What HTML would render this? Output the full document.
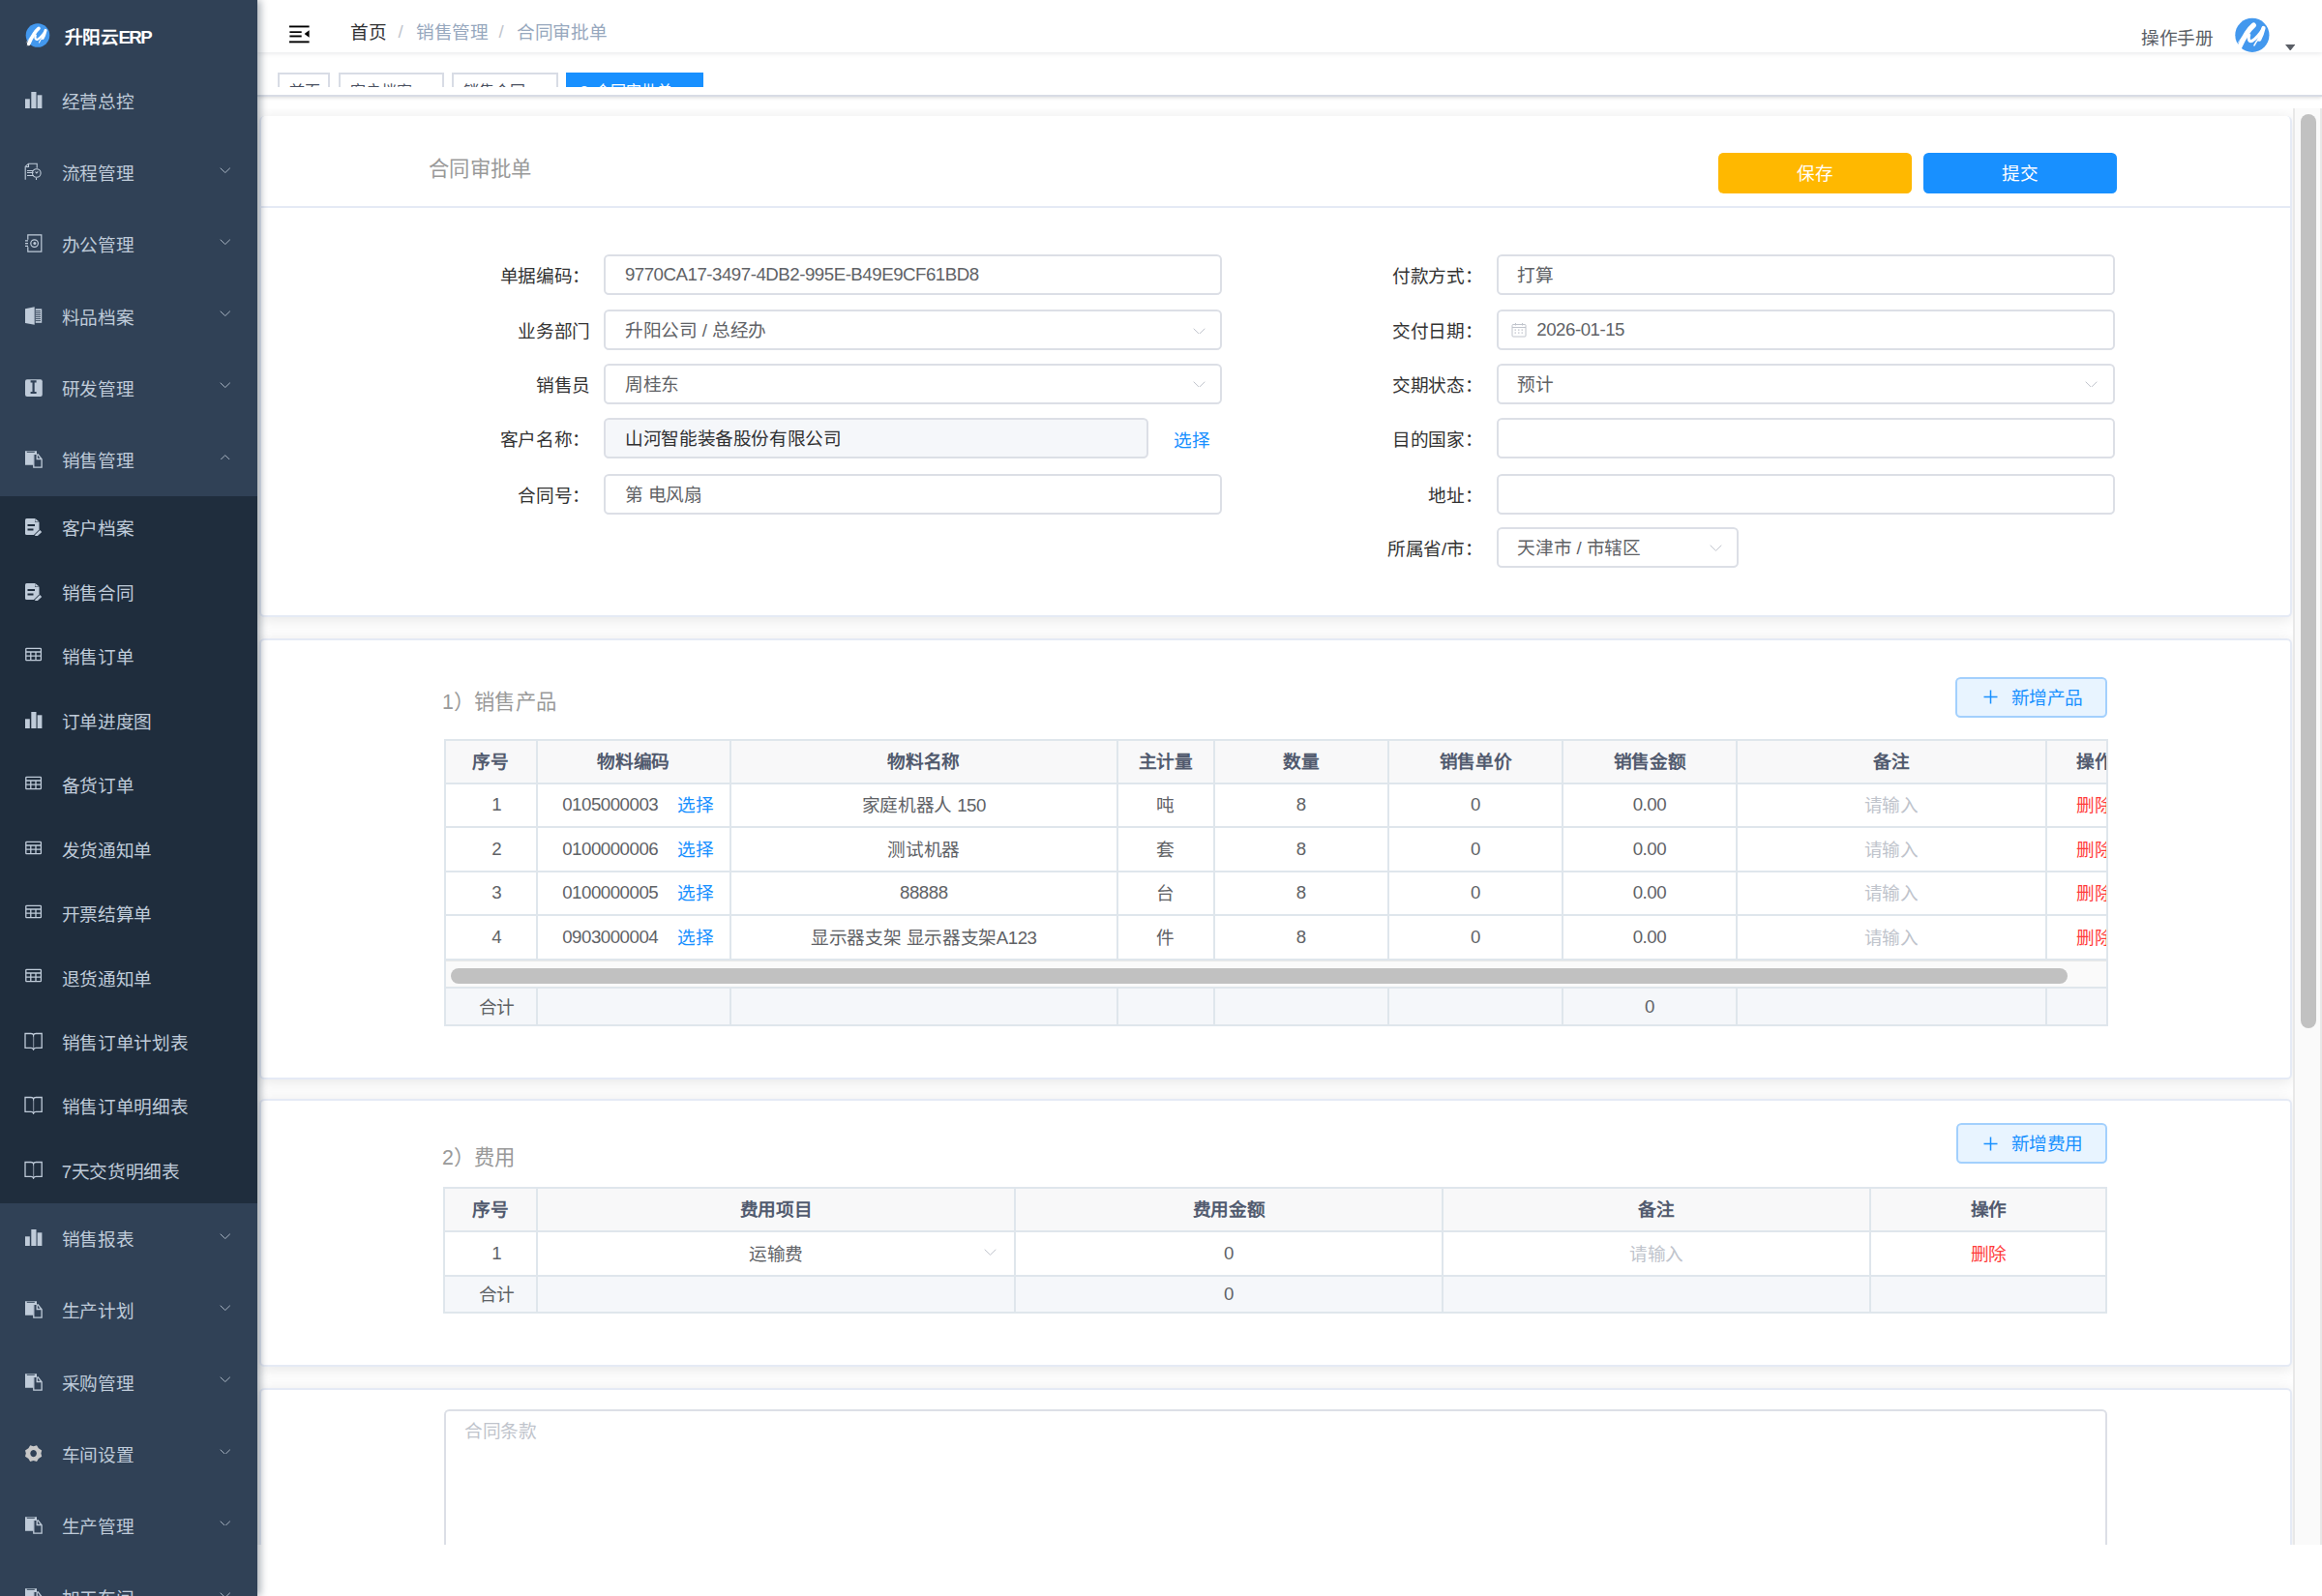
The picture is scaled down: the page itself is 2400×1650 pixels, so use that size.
<!DOCTYPE html>
<html lang="zh-CN"><head><meta charset="utf-8"><title>合同审批单</title>
<style>
html,body{margin:0;padding:0;}
body{width:2400px;height:1650px;overflow:hidden;position:relative;background:#fff;font-family:"Liberation Sans",sans-serif;}
div,svg{position:absolute;box-sizing:border-box;}
.t{white-space:nowrap;overflow:visible;}
.c{display:inline-block;width:1em;text-align:center;}
</style></head><body>

<div style="left:266px;top:112px;width:2134px;height:1484.7px;overflow:hidden;background:#fff;">
<div style="left:-266px;top:-112px;width:2400px;height:1650px;">
<div style="left:267.7px;top:120px;width:2101.6px;height:518px;background:#fff;border:2px solid #e5eaf5;border-radius:5.33px;box-shadow:0 2.67px 16px rgba(0,0,0,0.1);border-top:0;"></div>
<div style="left:267.7px;top:659.5px;width:2101.6px;height:456.5px;background:#fff;border:2px solid #e5eaf5;border-radius:5.33px;box-shadow:0 2.67px 16px rgba(0,0,0,0.1);"></div>
<div style="left:267.7px;top:1136px;width:2101.6px;height:277px;background:#fff;border:2px solid #e5eaf5;border-radius:5.33px;box-shadow:0 2.67px 16px rgba(0,0,0,0.1);"></div>
<div style="left:267.7px;top:1434.5px;width:2101.6px;height:365.5px;background:#fff;border:2px solid #e5eaf5;border-radius:5.33px;box-shadow:0 2.67px 16px rgba(0,0,0,0.1);"></div>
<div style="left:269.7px;top:213px;width:2097.6px;height:2px;background:#e5eaf5;"></div>
<div class="t" style="left:443px;top:160.87px;width:257px;height:29.86px;line-height:29.86px;font-size:21.33px;color:#999;text-align:left;font-weight:400;"><span class="c">合</span><span class="c">同</span><span class="c">审</span><span class="c">批</span><span class="c">单</span></div>
<div style="left:1776px;top:158px;width:200px;height:41.7px;background:#ffb800;border-radius:5.33px;"></div>
<div class="t" style="left:1776px;top:166.83px;width:200px;height:26.14px;line-height:26.14px;font-size:18.67px;color:#fff;text-align:center;font-weight:400;"><span class="c">保</span><span class="c">存</span></div>
<div style="left:1988px;top:158px;width:200px;height:41.7px;background:#1890ff;border-radius:5.33px;"></div>
<div class="t" style="left:1988px;top:166.83px;width:200px;height:26.14px;line-height:26.14px;font-size:18.67px;color:#fff;text-align:center;font-weight:400;"><span class="c">提</span><span class="c">交</span></div>
<div class="t" style="left:400px;top:273.13px;width:210px;height:26.14px;line-height:26.14px;font-size:18.67px;color:#333;text-align:right;font-weight:400;"><span class="c">单</span><span class="c">据</span><span class="c">编</span><span class="c">码</span><span class="c">：</span></div>
<div style="left:624.4px;top:263px;width:638.8px;height:42.4px;background:#fff;border:2px solid #dcdfe6;border-radius:5.33px;"></div>
<div class="t" style="left:645.9px;top:271.13px;width:577.3px;height:26.14px;line-height:26.14px;font-size:18.67px;color:#606266;text-align:left;font-weight:400;"><span style="letter-spacing:-0.47px">9770CA17-3497-4DB2-995E-B49E9CF61BD8</span></div>
<div class="t" style="left:400px;top:330.23px;width:210px;height:26.14px;line-height:26.14px;font-size:18.67px;color:#333;text-align:right;font-weight:400;"><span class="c">业</span><span class="c">务</span><span class="c">部</span><span class="c">门</span></div>
<div style="left:624.4px;top:320.1px;width:638.8px;height:42.4px;background:#fff;border:2px solid #dcdfe6;border-radius:5.33px;"></div>
<div class="t" style="left:645.9px;top:329.23px;width:577.3px;height:26.14px;line-height:26.14px;font-size:18.67px;color:#606266;text-align:left;font-weight:400;"><span class="c">升</span><span class="c">阳</span><span class="c">公</span><span class="c">司</span> / <span class="c">总</span><span class="c">经</span><span class="c">办</span></div>
<svg style="position:absolute;left:1233.1px;top:338.55px;" width="13" height="6.5" viewBox="0 0 13 6.5"><path d="M0.7 0.7 L6.5 6.3 L12.3 0.7" fill="none" stroke="#c0c4cc" stroke-width="1.0"/></svg>
<div class="t" style="left:400px;top:385.63px;width:210px;height:26.14px;line-height:26.14px;font-size:18.67px;color:#333;text-align:right;font-weight:400;"><span class="c">销</span><span class="c">售</span><span class="c">员</span></div>
<div style="left:624.4px;top:375.5px;width:638.8px;height:42.4px;background:#fff;border:2px solid #dcdfe6;border-radius:5.33px;"></div>
<div class="t" style="left:645.9px;top:384.63px;width:577.3px;height:26.14px;line-height:26.14px;font-size:18.67px;color:#606266;text-align:left;font-weight:400;"><span class="c">周</span><span class="c">桂</span><span class="c">东</span></div>
<svg style="position:absolute;left:1233.1px;top:393.95px;" width="13" height="6.5" viewBox="0 0 13 6.5"><path d="M0.7 0.7 L6.5 6.3 L12.3 0.7" fill="none" stroke="#c0c4cc" stroke-width="1.0"/></svg>
<div class="t" style="left:400px;top:442.23px;width:210px;height:26.14px;line-height:26.14px;font-size:18.67px;color:#333;text-align:right;font-weight:400;"><span class="c">客</span><span class="c">户</span><span class="c">名</span><span class="c">称</span><span class="c">：</span></div>
<div style="left:624.4px;top:432.1px;width:562.6px;height:42.4px;background:#f5f7fa;border:2px solid #dcdfe6;border-radius:5.33px;"></div>
<div class="t" style="left:645.9px;top:441.23px;width:534.1px;height:26.14px;line-height:26.14px;font-size:18.67px;color:#303133;text-align:left;font-weight:400;"><span class="c">山</span><span class="c">河</span><span class="c">智</span><span class="c">能</span><span class="c">装</span><span class="c">备</span><span class="c">股</span><span class="c">份</span><span class="c">有</span><span class="c">限</span><span class="c">公</span><span class="c">司</span></div>
<div class="t" style="left:1213px;top:442.53px;width:47px;height:26.14px;line-height:26.14px;font-size:18.67px;color:#1890ff;text-align:left;font-weight:400;"><span class="c">选</span><span class="c">择</span></div>
<div class="t" style="left:400px;top:499.63px;width:210px;height:26.14px;line-height:26.14px;font-size:18.67px;color:#333;text-align:right;font-weight:400;"><span class="c">合</span><span class="c">同</span><span class="c">号</span><span class="c">：</span></div>
<div style="left:624.4px;top:489.5px;width:638.8px;height:42.4px;background:#fff;border:2px solid #dcdfe6;border-radius:5.33px;"></div>
<div class="t" style="left:645.9px;top:498.63px;width:577.3px;height:26.14px;line-height:26.14px;font-size:18.67px;color:#606266;text-align:left;font-weight:400;"><span class="c">第</span> <span class="c">电</span><span class="c">风</span><span class="c">扇</span></div>
<div class="t" style="left:1300px;top:273.13px;width:232.4px;height:26.14px;line-height:26.14px;font-size:18.67px;color:#333;text-align:right;font-weight:400;"><span class="c">付</span><span class="c">款</span><span class="c">方</span><span class="c">式</span><span class="c">：</span></div>
<div style="left:1546.8px;top:263px;width:638.8px;height:42.4px;background:#fff;border:2px solid #dcdfe6;border-radius:5.33px;"></div>
<div class="t" style="left:1568.3px;top:272.13px;width:577.3px;height:26.14px;line-height:26.14px;font-size:18.67px;color:#606266;text-align:left;font-weight:400;"><span class="c">打</span><span class="c">算</span></div>
<div class="t" style="left:1300px;top:330.23px;width:232.4px;height:26.14px;line-height:26.14px;font-size:18.67px;color:#333;text-align:right;font-weight:400;"><span class="c">交</span><span class="c">付</span><span class="c">日</span><span class="c">期</span><span class="c">：</span></div>
<div style="left:1546.8px;top:320.1px;width:638.8px;height:42.4px;background:#fff;border:2px solid #dcdfe6;border-radius:5.33px;"></div>
<svg style="position:absolute;left:1562px;top:333.3px;" width="16" height="16" viewBox="0 0 16 16"><rect x="1" y="2.5" width="14" height="12.5" rx="1" fill="none" stroke="#c0c4cc" stroke-width="1"/><line x1="1" y1="5.5" x2="15" y2="5.5" stroke="#c0c4cc" stroke-width="1"/><line x1="4.5" y1="1" x2="4.5" y2="3.5" stroke="#c0c4cc"/><line x1="11.5" y1="1" x2="11.5" y2="3.5" stroke="#c0c4cc"/><g fill="#c0c4cc"><rect x="3.5" y="7.5" width="1.5" height="1.2"/><rect x="7" y="7.5" width="1.5" height="1.2"/><rect x="10.5" y="7.5" width="1.5" height="1.2"/><rect x="3.5" y="10.5" width="1.5" height="1.2"/><rect x="7" y="10.5" width="1.5" height="1.2"/><rect x="10.5" y="10.5" width="1.5" height="1.2"/></g></svg>
<div class="t" style="left:1588.3px;top:328.23px;width:511.7px;height:26.14px;line-height:26.14px;font-size:18.67px;color:#606266;text-align:left;font-weight:400;"><span style="letter-spacing:-0.47px">2026-01-15</span></div>
<div class="t" style="left:1300px;top:385.63px;width:232.4px;height:26.14px;line-height:26.14px;font-size:18.67px;color:#333;text-align:right;font-weight:400;"><span class="c">交</span><span class="c">期</span><span class="c">状</span><span class="c">态</span><span class="c">：</span></div>
<div style="left:1546.8px;top:375.5px;width:638.8px;height:42.4px;background:#fff;border:2px solid #dcdfe6;border-radius:5.33px;"></div>
<div class="t" style="left:1568.3px;top:384.63px;width:577.3px;height:26.14px;line-height:26.14px;font-size:18.67px;color:#606266;text-align:left;font-weight:400;"><span class="c">预</span><span class="c">计</span></div>
<svg style="position:absolute;left:2155px;top:393.95px;" width="13" height="6.5" viewBox="0 0 13 6.5"><path d="M0.7 0.7 L6.5 6.3 L12.3 0.7" fill="none" stroke="#c0c4cc" stroke-width="1.0"/></svg>
<div class="t" style="left:1300px;top:442.23px;width:232.4px;height:26.14px;line-height:26.14px;font-size:18.67px;color:#333;text-align:right;font-weight:400;"><span class="c">目</span><span class="c">的</span><span class="c">国</span><span class="c">家</span><span class="c">：</span></div>
<div style="left:1546.8px;top:432.1px;width:638.8px;height:42.4px;background:#fff;border:2px solid #dcdfe6;border-radius:5.33px;"></div>
<div class="t" style="left:1300px;top:499.63px;width:232.4px;height:26.14px;line-height:26.14px;font-size:18.67px;color:#333;text-align:right;font-weight:400;"><span class="c">地</span><span class="c">址</span><span class="c">：</span></div>
<div style="left:1546.8px;top:489.5px;width:638.8px;height:42.4px;background:#fff;border:2px solid #dcdfe6;border-radius:5.33px;"></div>
<div class="t" style="left:1300px;top:555.13px;width:232.4px;height:26.14px;line-height:26.14px;font-size:18.67px;color:#333;text-align:right;font-weight:400;"><span class="c">所</span><span class="c">属</span><span class="c">省</span>/<span class="c">市</span><span class="c">：</span></div>
<div style="left:1546.8px;top:545px;width:250.4px;height:42.4px;background:#fff;border:2px solid #dcdfe6;border-radius:5.33px;"></div>
<div class="t" style="left:1568.3px;top:554.13px;width:191.7px;height:26.14px;line-height:26.14px;font-size:18.67px;color:#606266;text-align:left;font-weight:400;"><span class="c">天</span><span class="c">津</span><span class="c">市</span> / <span class="c">市</span><span class="c">辖</span><span class="c">区</span></div>
<svg style="position:absolute;left:1767.1px;top:563.45px;" width="13" height="6.5" viewBox="0 0 13 6.5"><path d="M0.7 0.7 L6.5 6.3 L12.3 0.7" fill="none" stroke="#c0c4cc" stroke-width="1.0"/></svg>
<div class="t" style="left:457px;top:711.97px;width:343px;height:29.86px;line-height:29.86px;font-size:21.33px;color:#999;text-align:left;font-weight:400;"><span style="letter-spacing:-0.47px">1</span><span class="c">）</span><span class="c">销</span><span class="c">售</span><span class="c">产</span><span class="c">品</span></div>
<div style="left:2021.3px;top:699.6px;width:157.1px;height:42.7px;background:#e8f4ff;border:2px solid #a3d0fd;border-radius:5.33px;"></div>
<svg style="position:absolute;left:2050px;top:713.45px;" width="15" height="15" viewBox="0 0 15 15"><path d="M7.5 0.5V14.5M0.5 7.5H14.5" stroke="#1890ff" stroke-width="1.5"/></svg>
<div class="t" style="left:2078.5px;top:708.88px;width:91.5px;height:26.14px;line-height:26.14px;font-size:18.67px;color:#1890ff;text-align:left;font-weight:400;"><span class="c">新</span><span class="c">增</span><span class="c">产</span><span class="c">品</span></div>
<div style="left:458.8px;top:763.7px;width:1720px;height:2000px;overflow:hidden;">
<div style="left:-458.8px;top:-763.7px;width:2400px;height:1650px;">
<div style="left:458.8px;top:763.7px;width:1756.1px;height:46px;background:#f8f8f9;"></div>
<div class="t" style="left:458.8px;top:775.13px;width:95.9px;height:26.14px;line-height:26.14px;font-size:18.67px;color:#515a6e;text-align:center;font-weight:700;"><span class="c">序</span><span class="c">号</span></div>
<div class="t" style="left:554.7px;top:775.13px;width:200.1px;height:26.14px;line-height:26.14px;font-size:18.67px;color:#515a6e;text-align:center;font-weight:700;"><span class="c">物</span><span class="c">料</span><span class="c">编</span><span class="c">码</span></div>
<div class="t" style="left:754.8px;top:775.13px;width:400px;height:26.14px;line-height:26.14px;font-size:18.67px;color:#515a6e;text-align:center;font-weight:700;"><span class="c">物</span><span class="c">料</span><span class="c">名</span><span class="c">称</span></div>
<div class="t" style="left:1154.8px;top:775.13px;width:100px;height:26.14px;line-height:26.14px;font-size:18.67px;color:#515a6e;text-align:center;font-weight:700;"><span class="c">主</span><span class="c">计</span><span class="c">量</span></div>
<div class="t" style="left:1254.8px;top:775.13px;width:180px;height:26.14px;line-height:26.14px;font-size:18.67px;color:#515a6e;text-align:center;font-weight:700;"><span class="c">数</span><span class="c">量</span></div>
<div class="t" style="left:1434.8px;top:775.13px;width:180.2px;height:26.14px;line-height:26.14px;font-size:18.67px;color:#515a6e;text-align:center;font-weight:700;"><span class="c">销</span><span class="c">售</span><span class="c">单</span><span class="c">价</span></div>
<div class="t" style="left:1615px;top:775.13px;width:179.7px;height:26.14px;line-height:26.14px;font-size:18.67px;color:#515a6e;text-align:center;font-weight:700;"><span class="c">销</span><span class="c">售</span><span class="c">金</span><span class="c">额</span></div>
<div class="t" style="left:1794.7px;top:775.13px;width:320.2px;height:26.14px;line-height:26.14px;font-size:18.67px;color:#515a6e;text-align:center;font-weight:700;"><span class="c">备</span><span class="c">注</span></div>
<div class="t" style="left:2114.9px;top:775.13px;width:100px;height:26.14px;line-height:26.14px;font-size:18.67px;color:#515a6e;text-align:center;font-weight:700;"><span class="c">操</span><span class="c">作</span></div>
<div style="left:458.8px;top:809.7px;width:1756.1px;height:45.5px;background:#fff;"></div>
<div class="t" style="left:465.3px;top:819.38px;width:95.9px;height:26.14px;line-height:26.14px;font-size:18.67px;color:#606266;text-align:center;font-weight:400;"><span style="letter-spacing:-0.47px">1</span></div>
<div class="t" style="left:581.2px;top:819.38px;width:103.5px;height:26.14px;line-height:26.14px;font-size:18.67px;color:#606266;text-align:left;font-weight:400;"><span style="letter-spacing:-0.47px">0105000003</span></div>
<div class="t" style="left:700.2px;top:820.38px;width:44.5px;height:26.14px;line-height:26.14px;font-size:18.67px;color:#1890ff;text-align:left;font-weight:400;"><span class="c">选</span><span class="c">择</span></div>
<div class="t" style="left:754.8px;top:820.38px;width:400px;height:26.14px;line-height:26.14px;font-size:18.67px;color:#606266;text-align:center;font-weight:400;"><span class="c">家</span><span class="c">庭</span><span class="c">机</span><span class="c">器</span><span class="c">人</span> <span style="letter-spacing:-0.47px">150</span></div>
<div class="t" style="left:1154.8px;top:820.38px;width:100px;height:26.14px;line-height:26.14px;font-size:18.67px;color:#606266;text-align:center;font-weight:400;"><span class="c">吨</span></div>
<div class="t" style="left:1254.8px;top:819.38px;width:180px;height:26.14px;line-height:26.14px;font-size:18.67px;color:#606266;text-align:center;font-weight:400;"><span style="letter-spacing:-0.47px">8</span></div>
<div class="t" style="left:1434.8px;top:819.38px;width:180.2px;height:26.14px;line-height:26.14px;font-size:18.67px;color:#606266;text-align:center;font-weight:400;"><span style="letter-spacing:-0.47px">0</span></div>
<div class="t" style="left:1615px;top:819.38px;width:179.7px;height:26.14px;line-height:26.14px;font-size:18.67px;color:#606266;text-align:center;font-weight:400;"><span style="letter-spacing:-0.47px">0.00</span></div>
<div class="t" style="left:1794.7px;top:820.38px;width:320.2px;height:26.14px;line-height:26.14px;font-size:18.67px;color:#c0c4cc;text-align:center;font-weight:400;"><span class="c">请</span><span class="c">输</span><span class="c">入</span></div>
<div class="t" style="left:2114.9px;top:820.38px;width:100px;height:26.14px;line-height:26.14px;font-size:18.67px;color:#ff3b3b;text-align:center;font-weight:500;"><span class="c">删</span><span class="c">除</span></div>
<div style="left:458.8px;top:855.2px;width:1756.1px;height:45.5px;background:#fff;"></div>
<div class="t" style="left:465.3px;top:864.88px;width:95.9px;height:26.14px;line-height:26.14px;font-size:18.67px;color:#606266;text-align:center;font-weight:400;"><span style="letter-spacing:-0.47px">2</span></div>
<div class="t" style="left:581.2px;top:864.88px;width:103.5px;height:26.14px;line-height:26.14px;font-size:18.67px;color:#606266;text-align:left;font-weight:400;"><span style="letter-spacing:-0.47px">0100000006</span></div>
<div class="t" style="left:700.2px;top:865.88px;width:44.5px;height:26.14px;line-height:26.14px;font-size:18.67px;color:#1890ff;text-align:left;font-weight:400;"><span class="c">选</span><span class="c">择</span></div>
<div class="t" style="left:754.8px;top:865.88px;width:400px;height:26.14px;line-height:26.14px;font-size:18.67px;color:#606266;text-align:center;font-weight:400;"><span class="c">测</span><span class="c">试</span><span class="c">机</span><span class="c">器</span></div>
<div class="t" style="left:1154.8px;top:865.88px;width:100px;height:26.14px;line-height:26.14px;font-size:18.67px;color:#606266;text-align:center;font-weight:400;"><span class="c">套</span></div>
<div class="t" style="left:1254.8px;top:864.88px;width:180px;height:26.14px;line-height:26.14px;font-size:18.67px;color:#606266;text-align:center;font-weight:400;"><span style="letter-spacing:-0.47px">8</span></div>
<div class="t" style="left:1434.8px;top:864.88px;width:180.2px;height:26.14px;line-height:26.14px;font-size:18.67px;color:#606266;text-align:center;font-weight:400;"><span style="letter-spacing:-0.47px">0</span></div>
<div class="t" style="left:1615px;top:864.88px;width:179.7px;height:26.14px;line-height:26.14px;font-size:18.67px;color:#606266;text-align:center;font-weight:400;"><span style="letter-spacing:-0.47px">0.00</span></div>
<div class="t" style="left:1794.7px;top:865.88px;width:320.2px;height:26.14px;line-height:26.14px;font-size:18.67px;color:#c0c4cc;text-align:center;font-weight:400;"><span class="c">请</span><span class="c">输</span><span class="c">入</span></div>
<div class="t" style="left:2114.9px;top:865.88px;width:100px;height:26.14px;line-height:26.14px;font-size:18.67px;color:#ff3b3b;text-align:center;font-weight:500;"><span class="c">删</span><span class="c">除</span></div>
<div style="left:458.8px;top:900.7px;width:1756.1px;height:45.5px;background:#fff;"></div>
<div class="t" style="left:465.3px;top:910.38px;width:95.9px;height:26.14px;line-height:26.14px;font-size:18.67px;color:#606266;text-align:center;font-weight:400;"><span style="letter-spacing:-0.47px">3</span></div>
<div class="t" style="left:581.2px;top:910.38px;width:103.5px;height:26.14px;line-height:26.14px;font-size:18.67px;color:#606266;text-align:left;font-weight:400;"><span style="letter-spacing:-0.47px">0100000005</span></div>
<div class="t" style="left:700.2px;top:911.38px;width:44.5px;height:26.14px;line-height:26.14px;font-size:18.67px;color:#1890ff;text-align:left;font-weight:400;"><span class="c">选</span><span class="c">择</span></div>
<div class="t" style="left:754.8px;top:910.38px;width:400px;height:26.14px;line-height:26.14px;font-size:18.67px;color:#606266;text-align:center;font-weight:400;"><span style="letter-spacing:-0.47px">88888</span></div>
<div class="t" style="left:1154.8px;top:911.38px;width:100px;height:26.14px;line-height:26.14px;font-size:18.67px;color:#606266;text-align:center;font-weight:400;"><span class="c">台</span></div>
<div class="t" style="left:1254.8px;top:910.38px;width:180px;height:26.14px;line-height:26.14px;font-size:18.67px;color:#606266;text-align:center;font-weight:400;"><span style="letter-spacing:-0.47px">8</span></div>
<div class="t" style="left:1434.8px;top:910.38px;width:180.2px;height:26.14px;line-height:26.14px;font-size:18.67px;color:#606266;text-align:center;font-weight:400;"><span style="letter-spacing:-0.47px">0</span></div>
<div class="t" style="left:1615px;top:910.38px;width:179.7px;height:26.14px;line-height:26.14px;font-size:18.67px;color:#606266;text-align:center;font-weight:400;"><span style="letter-spacing:-0.47px">0.00</span></div>
<div class="t" style="left:1794.7px;top:911.38px;width:320.2px;height:26.14px;line-height:26.14px;font-size:18.67px;color:#c0c4cc;text-align:center;font-weight:400;"><span class="c">请</span><span class="c">输</span><span class="c">入</span></div>
<div class="t" style="left:2114.9px;top:911.38px;width:100px;height:26.14px;line-height:26.14px;font-size:18.67px;color:#ff3b3b;text-align:center;font-weight:500;"><span class="c">删</span><span class="c">除</span></div>
<div style="left:458.8px;top:946.2px;width:1756.1px;height:45.5px;background:#fff;"></div>
<div class="t" style="left:465.3px;top:955.88px;width:95.9px;height:26.14px;line-height:26.14px;font-size:18.67px;color:#606266;text-align:center;font-weight:400;"><span style="letter-spacing:-0.47px">4</span></div>
<div class="t" style="left:581.2px;top:955.88px;width:103.5px;height:26.14px;line-height:26.14px;font-size:18.67px;color:#606266;text-align:left;font-weight:400;"><span style="letter-spacing:-0.47px">0903000004</span></div>
<div class="t" style="left:700.2px;top:956.88px;width:44.5px;height:26.14px;line-height:26.14px;font-size:18.67px;color:#1890ff;text-align:left;font-weight:400;"><span class="c">选</span><span class="c">择</span></div>
<div class="t" style="left:754.8px;top:956.88px;width:400px;height:26.14px;line-height:26.14px;font-size:18.67px;color:#606266;text-align:center;font-weight:400;"><span class="c">显</span><span class="c">示</span><span class="c">器</span><span class="c">支</span><span class="c">架</span> <span class="c">显</span><span class="c">示</span><span class="c">器</span><span class="c">支</span><span class="c">架</span><span style="letter-spacing:-0.47px">A123</span></div>
<div class="t" style="left:1154.8px;top:956.88px;width:100px;height:26.14px;line-height:26.14px;font-size:18.67px;color:#606266;text-align:center;font-weight:400;"><span class="c">件</span></div>
<div class="t" style="left:1254.8px;top:955.88px;width:180px;height:26.14px;line-height:26.14px;font-size:18.67px;color:#606266;text-align:center;font-weight:400;"><span style="letter-spacing:-0.47px">8</span></div>
<div class="t" style="left:1434.8px;top:955.88px;width:180.2px;height:26.14px;line-height:26.14px;font-size:18.67px;color:#606266;text-align:center;font-weight:400;"><span style="letter-spacing:-0.47px">0</span></div>
<div class="t" style="left:1615px;top:955.88px;width:179.7px;height:26.14px;line-height:26.14px;font-size:18.67px;color:#606266;text-align:center;font-weight:400;"><span style="letter-spacing:-0.47px">0.00</span></div>
<div class="t" style="left:1794.7px;top:956.88px;width:320.2px;height:26.14px;line-height:26.14px;font-size:18.67px;color:#c0c4cc;text-align:center;font-weight:400;"><span class="c">请</span><span class="c">输</span><span class="c">入</span></div>
<div class="t" style="left:2114.9px;top:956.88px;width:100px;height:26.14px;line-height:26.14px;font-size:18.67px;color:#ff3b3b;text-align:center;font-weight:500;"><span class="c">删</span><span class="c">除</span></div>
<div style="left:458.8px;top:991.7px;width:1720px;height:29.7px;background:#fafafa;border-top:2.4px solid #e8e8e8;"></div>
<div style="left:466px;top:1001px;width:1670.8px;height:15.9px;background:#c1c1c1;border-radius:8px;"></div>
<div style="left:458.8px;top:1021.4px;width:1756.1px;height:39.4px;background:#f5f7fa;"></div>
<div class="t" style="left:465.3px;top:1029.03px;width:95.9px;height:26.14px;line-height:26.14px;font-size:18.67px;color:#606266;text-align:center;font-weight:400;"><span class="c">合</span><span class="c">计</span></div>
<div class="t" style="left:1615px;top:1028.03px;width:179.7px;height:26.14px;line-height:26.14px;font-size:18.67px;color:#606266;text-align:center;font-weight:400;"><span style="letter-spacing:-0.47px">0</span></div>
<div style="left:458.8px;top:808.7px;width:1756.1px;height:2px;background:#dfe6ec;"></div>
<div style="left:458.8px;top:854.2px;width:1756.1px;height:2px;background:#dfe6ec;"></div>
<div style="left:458.8px;top:899.7px;width:1756.1px;height:2px;background:#dfe6ec;"></div>
<div style="left:458.8px;top:945.2px;width:1756.1px;height:2px;background:#dfe6ec;"></div>
<div style="left:458.8px;top:990.7px;width:1756.1px;height:2px;background:#dfe6ec;"></div>
<div style="left:458.8px;top:1020.4px;width:1756.1px;height:2px;background:#dfe6ec;"></div>
<div style="left:553.7px;top:763.7px;width:2px;height:228px;background:#dfe6ec;"></div>
<div style="left:553.7px;top:1021.4px;width:2px;height:39.4px;background:#dfe6ec;"></div>
<div style="left:753.8px;top:763.7px;width:2px;height:228px;background:#dfe6ec;"></div>
<div style="left:753.8px;top:1021.4px;width:2px;height:39.4px;background:#dfe6ec;"></div>
<div style="left:1153.8px;top:763.7px;width:2px;height:228px;background:#dfe6ec;"></div>
<div style="left:1153.8px;top:1021.4px;width:2px;height:39.4px;background:#dfe6ec;"></div>
<div style="left:1253.8px;top:763.7px;width:2px;height:228px;background:#dfe6ec;"></div>
<div style="left:1253.8px;top:1021.4px;width:2px;height:39.4px;background:#dfe6ec;"></div>
<div style="left:1433.8px;top:763.7px;width:2px;height:228px;background:#dfe6ec;"></div>
<div style="left:1433.8px;top:1021.4px;width:2px;height:39.4px;background:#dfe6ec;"></div>
<div style="left:1614px;top:763.7px;width:2px;height:228px;background:#dfe6ec;"></div>
<div style="left:1614px;top:1021.4px;width:2px;height:39.4px;background:#dfe6ec;"></div>
<div style="left:1793.7px;top:763.7px;width:2px;height:228px;background:#dfe6ec;"></div>
<div style="left:1793.7px;top:1021.4px;width:2px;height:39.4px;background:#dfe6ec;"></div>
<div style="left:2113.9px;top:763.7px;width:2px;height:228px;background:#dfe6ec;"></div>
<div style="left:2113.9px;top:1021.4px;width:2px;height:39.4px;background:#dfe6ec;"></div>
</div></div>
<div style="left:458.8px;top:763.7px;width:1720px;height:297.1px;border:2px solid #dfe6ec;"></div>
<div class="t" style="left:457px;top:1182.97px;width:343px;height:29.86px;line-height:29.86px;font-size:21.33px;color:#999;text-align:left;font-weight:400;"><span style="letter-spacing:-0.47px">2</span><span class="c">）</span><span class="c">费</span><span class="c">用</span></div>
<div style="left:2021.9px;top:1161.4px;width:156.1px;height:41.6px;background:#e8f4ff;border:2px solid #a3d0fd;border-radius:5.33px;"></div>
<svg style="position:absolute;left:2050px;top:1174.7px;" width="15" height="15" viewBox="0 0 15 15"><path d="M7.5 0.5V14.5M0.5 7.5H14.5" stroke="#1890ff" stroke-width="1.5"/></svg>
<div class="t" style="left:2078.5px;top:1170.13px;width:91.5px;height:26.14px;line-height:26.14px;font-size:18.67px;color:#1890ff;text-align:left;font-weight:400;"><span class="c">新</span><span class="c">增</span><span class="c">费</span><span class="c">用</span></div>
<div style="left:458.4px;top:1226.9px;width:1719.2px;height:2000px;overflow:hidden;">
<div style="left:-458.4px;top:-1226.9px;width:2400px;height:1650px;">
<div style="left:458.4px;top:1226.9px;width:1719.2px;height:46.1px;background:#f8f8f9;"></div>
<div class="t" style="left:458.4px;top:1238.38px;width:96.6px;height:26.14px;line-height:26.14px;font-size:18.67px;color:#515a6e;text-align:center;font-weight:700;"><span class="c">序</span><span class="c">号</span></div>
<div class="t" style="left:555px;top:1238.38px;width:494.1px;height:26.14px;line-height:26.14px;font-size:18.67px;color:#515a6e;text-align:center;font-weight:700;"><span class="c">费</span><span class="c">用</span><span class="c">项</span><span class="c">目</span></div>
<div class="t" style="left:1049.1px;top:1238.38px;width:441.6px;height:26.14px;line-height:26.14px;font-size:18.67px;color:#515a6e;text-align:center;font-weight:700;"><span class="c">费</span><span class="c">用</span><span class="c">金</span><span class="c">额</span></div>
<div class="t" style="left:1490.7px;top:1238.38px;width:442.3px;height:26.14px;line-height:26.14px;font-size:18.67px;color:#515a6e;text-align:center;font-weight:700;"><span class="c">备</span><span class="c">注</span></div>
<div class="t" style="left:1933px;top:1238.38px;width:244.6px;height:26.14px;line-height:26.14px;font-size:18.67px;color:#515a6e;text-align:center;font-weight:700;"><span class="c">操</span><span class="c">作</span></div>
<div style="left:458.4px;top:1273px;width:1719.2px;height:45.8px;background:#fff;"></div>
<div class="t" style="left:464.9px;top:1282.83px;width:96.6px;height:26.14px;line-height:26.14px;font-size:18.67px;color:#606266;text-align:center;font-weight:400;"><span style="letter-spacing:-0.47px">1</span></div>
<div class="t" style="left:555px;top:1283.83px;width:494.1px;height:26.14px;line-height:26.14px;font-size:18.67px;color:#606266;text-align:center;font-weight:400;"><span class="c">运</span><span class="c">输</span><span class="c">费</span></div>
<svg style="position:absolute;left:1017px;top:1291.05px;" width="13" height="6.5" viewBox="0 0 13 6.5"><path d="M0.7 0.7 L6.5 6.3 L12.3 0.7" fill="none" stroke="#c0c4cc" stroke-width="1.0"/></svg>
<div class="t" style="left:1049.1px;top:1282.83px;width:441.6px;height:26.14px;line-height:26.14px;font-size:18.67px;color:#606266;text-align:center;font-weight:400;"><span style="letter-spacing:-0.47px">0</span></div>
<div class="t" style="left:1490.7px;top:1283.83px;width:442.3px;height:26.14px;line-height:26.14px;font-size:18.67px;color:#c0c4cc;text-align:center;font-weight:400;"><span class="c">请</span><span class="c">输</span><span class="c">入</span></div>
<div class="t" style="left:1933px;top:1283.83px;width:244.6px;height:26.14px;line-height:26.14px;font-size:18.67px;color:#ff3b3b;text-align:center;font-weight:500;"><span class="c">删</span><span class="c">除</span></div>
<div style="left:458.4px;top:1318.8px;width:1719.2px;height:39px;background:#f5f7fa;"></div>
<div class="t" style="left:464.9px;top:1326.23px;width:96.6px;height:26.14px;line-height:26.14px;font-size:18.67px;color:#606266;text-align:center;font-weight:400;"><span class="c">合</span><span class="c">计</span></div>
<div class="t" style="left:1049.1px;top:1325.23px;width:441.6px;height:26.14px;line-height:26.14px;font-size:18.67px;color:#606266;text-align:center;font-weight:400;"><span style="letter-spacing:-0.47px">0</span></div>
<div style="left:458.4px;top:1272px;width:1719.2px;height:2px;background:#dfe6ec;"></div>
<div style="left:458.4px;top:1317.8px;width:1719.2px;height:2px;background:#dfe6ec;"></div>
<div style="left:554px;top:1226.9px;width:2px;height:91.9px;background:#dfe6ec;"></div>
<div style="left:554px;top:1318.8px;width:2px;height:39px;background:#dfe6ec;"></div>
<div style="left:1048.1px;top:1226.9px;width:2px;height:91.9px;background:#dfe6ec;"></div>
<div style="left:1048.1px;top:1318.8px;width:2px;height:39px;background:#dfe6ec;"></div>
<div style="left:1489.7px;top:1226.9px;width:2px;height:91.9px;background:#dfe6ec;"></div>
<div style="left:1489.7px;top:1318.8px;width:2px;height:39px;background:#dfe6ec;"></div>
<div style="left:1932px;top:1226.9px;width:2px;height:91.9px;background:#dfe6ec;"></div>
<div style="left:1932px;top:1318.8px;width:2px;height:39px;background:#dfe6ec;"></div>
</div></div>
<div style="left:458.4px;top:1226.9px;width:1719.2px;height:130.9px;border:2px solid #dfe6ec;"></div>
<div style="left:458.5px;top:1456.5px;width:1719.5px;height:243.5px;border:2px solid #dcdfe6;border-radius:5.33px;background:#fff;"></div>
<div class="t" style="left:480px;top:1466.63px;width:220px;height:26.14px;line-height:26.14px;font-size:18.67px;color:#c0c4cc;text-align:left;font-weight:400;"><span class="c">合</span><span class="c">同</span><span class="c">条</span><span class="c">款</span></div>
</div>
<div style="left:2104px;top:0;width:30px;height:1484.7px;background:#fafafa;border-left:2px solid #e8e8e8;border-right:2px solid #e8e8e8;"></div>
<div style="left:2112px;top:5.8px;width:16px;height:945.2px;background:#c1c1c1;border-radius:8px;"></div>
</div>
<div style="left:266px;top:0px;width:2134px;height:54px;background:#fff;box-shadow:0 1.33px 5.33px rgba(0,21,41,0.10);z-index:4;"></div>
<svg style="position:absolute;left:298.5px;top:25.5px;z-index:4;" width="21" height="19" viewBox="0 0 21 19"><g fill="#000"><rect x="0" y="0.5" width="20.6" height="1.9"/><rect x="0.4" y="6.3" width="12.3" height="1.7"/><rect x="0.4" y="10.5" width="12.3" height="1.9"/><rect x="0" y="16.4" width="20.6" height="1.9"/><path d="M20.6 5.2 L15.6 9 L20.6 12.7 Z"/></g></svg>
<div style="left:0;top:0;width:2400px;height:54px;z-index:4;">
<div class="t" style="left:362px;top:20.68px;width:38px;height:26.14px;line-height:26.14px;font-size:18.67px;color:#303133;text-align:left;font-weight:400;"><span class="c">首</span><span class="c">页</span></div>
<div class="t" style="left:404px;top:19.68px;width:20px;height:26.14px;line-height:26.14px;font-size:18.67px;color:#c0c4cc;text-align:center;font-weight:400;">/</div>
<div class="t" style="left:430px;top:20.68px;width:80px;height:26.14px;line-height:26.14px;font-size:18.67px;color:#97a8be;text-align:left;font-weight:400;"><span class="c">销</span><span class="c">售</span><span class="c">管</span><span class="c">理</span></div>
<div class="t" style="left:508px;top:19.68px;width:20px;height:26.14px;line-height:26.14px;font-size:18.67px;color:#c0c4cc;text-align:center;font-weight:400;">/</div>
<div class="t" style="left:534px;top:20.68px;width:106px;height:26.14px;line-height:26.14px;font-size:18.67px;color:#97a8be;text-align:left;font-weight:400;"><span class="c">合</span><span class="c">同</span><span class="c">审</span><span class="c">批</span><span class="c">单</span></div>
<div class="t" style="left:2213px;top:27.43px;width:77px;height:26.14px;line-height:26.14px;font-size:18.67px;color:#5a5e66;text-align:left;font-weight:400;"><span class="c">操</span><span class="c">作</span><span class="c">手</span><span class="c">册</span></div>
</div>
<svg style="position:absolute;left:2304.72px;top:16.84px;z-index:4;" width="44" height="38.72" viewBox="-15 -5 125 110"><circle cx="50" cy="50" r="50" fill="#4398ee"/><g fill="none" stroke="#fff" stroke-linecap="round" stroke-linejoin="round"><path d="M12 86 C 22 64, 38 34, 54 21" stroke-width="15"/><path d="M41 50 C 37 62, 41 71, 51 66 C 62 59, 74 44, 83 30" stroke-width="9"/><path d="M83 29 C 80 42, 77 52, 71 62" stroke-width="12"/><path d="M67 63 C 62 68, 59 74, 56 80" stroke-width="4.5"/><path d="M2 80 L 20 56 M6 94 L 14 84" stroke-width="2.5" stroke-opacity="0.7"/></g></svg>
<svg style="position:absolute;left:2361.5px;top:45.8px;z-index:4;" width="10.5" height="6.5" viewBox="0 0 10.5 6.5"><path d="M0 0 H10.5 L5.25 6.5 Z" fill="#5a5e66"/></svg>
<div style="left:266px;top:54px;width:2134px;height:46px;background:#fff;border-bottom:2px solid #d8dce5;box-shadow:0 1.33px 4px 0 rgba(0,0,0,0.12),0 0 4px 0 rgba(0,0,0,0.04);z-index:1;"></div>
<div style="left:266px;top:54px;width:2134px;height:35.5px;overflow:hidden;z-index:2;">
<div style="left:-266px;top:-54px;width:2400px;height:200px;">
<div style="left:287.3px;top:75px;width:54.1px;height:34.67px;background:#fff;border:2px solid #d8dce5;"></div>
<div class="t" style="left:298.8px;top:84.1px;width:42.6px;height:22.4px;line-height:22.4px;font-size:16px;color:#495060;text-align:left;font-weight:400;"><span class="c">首</span><span class="c">页</span></div>
<div style="left:350.3px;top:75px;width:109px;height:34.67px;background:#fff;border:2px solid #d8dce5;"></div>
<div class="t" style="left:361.8px;top:84.1px;width:97.5px;height:22.4px;line-height:22.4px;font-size:16px;color:#495060;text-align:left;font-weight:400;"><span class="c">客</span><span class="c">户</span><span class="c">档</span><span class="c">案</span></div>
<div style="left:467.2px;top:75px;width:110.3px;height:34.67px;background:#fff;border:2px solid #d8dce5;"></div>
<div class="t" style="left:478.7px;top:84.1px;width:98.8px;height:22.4px;line-height:22.4px;font-size:16px;color:#495060;text-align:left;font-weight:400;"><span class="c">销</span><span class="c">售</span><span class="c">合</span><span class="c">同</span></div>
<div style="left:585px;top:75px;width:141.7px;height:34.67px;background:#1890ff;border:1.33px solid #1890ff;"></div>
<div style="left:598.5px;top:89px;width:10.67px;height:10.67px;background:#fff;border-radius:50%;"></div>
<div class="t" style="left:615px;top:84.1px;width:111.7px;height:22.4px;line-height:22.4px;font-size:16px;color:#fff;text-align:left;font-weight:400;"><span class="c">合</span><span class="c">同</span><span class="c">审</span><span class="c">批</span><span class="c">单</span></div>
</div></div>
<div style="left:0;top:0;width:266px;height:1650px;background:#304156;box-shadow:2.67px 0 8px rgba(0,21,41,0.35);z-index:5;overflow:hidden;">
<svg style="position:absolute;left:23.01px;top:22.87px;" width="30.75" height="27.06" viewBox="-15 -5 125 110"><circle cx="50" cy="50" r="50" fill="#4398ee"/><g fill="none" stroke="#fff" stroke-linecap="round" stroke-linejoin="round"><path d="M12 86 C 22 64, 38 34, 54 21" stroke-width="15"/><path d="M41 50 C 37 62, 41 71, 51 66 C 62 59, 74 44, 83 30" stroke-width="9"/><path d="M83 29 C 80 42, 77 52, 71 62" stroke-width="12"/><path d="M67 63 C 62 68, 59 74, 56 80" stroke-width="4.5"/><path d="M2 80 L 20 56 M6 94 L 14 84" stroke-width="2.5" stroke-opacity="0.7"/></g></svg>
<div class="t" style="left:66.5px;top:25.73px;width:133.5px;height:26.14px;line-height:26.14px;font-size:18.67px;color:#fff;text-align:left;font-weight:700;"><span class="c">升</span><span class="c">阳</span><span class="c">云</span><span style="letter-spacing:-1.6px">ERP</span></div>
<svg style="position:absolute;left:25.3px;top:93.9px;" width="19" height="19" viewBox="0 0 19 19"><g fill="#bfcbd9"><rect x="1" y="8.3" width="4.8" height="9.7"/><rect x="7.3" y="1" width="5.2" height="17"/><rect x="13.6" y="4.3" width="4.8" height="13.7"/></g></svg>
<div class="t" style="left:63.8px;top:92.93px;width:186.2px;height:26.14px;line-height:26.14px;font-size:18.67px;color:#bfcbd9;text-align:left;font-weight:400;"><span class="c">经</span><span class="c">营</span><span class="c">总</span><span class="c">控</span></div>
<svg style="position:absolute;left:25.3px;top:168.1px;" width="19" height="19" viewBox="0 0 19 19"><g fill="none" stroke="#bfcbd9" stroke-width="1.1"><path d="M1.2 17.8 V4.2 L4.5 1.2 H13.2 V5.8"/><path d="M1.8 4.5 H4.5 V1.5"/><path d="M3 8.5 H9.5 M3 10.5 H9.5 M3 13.5 H10"/><circle cx="12.8" cy="11" r="4.3"/><path d="M11.5 9.5 L12.8 11 L14.3 9.3 M12.5 16 V18"/></g></svg>
<div class="t" style="left:63.8px;top:167.13px;width:186.2px;height:26.14px;line-height:26.14px;font-size:18.67px;color:#bfcbd9;text-align:left;font-weight:400;"><span class="c">流</span><span class="c">程</span><span class="c">管</span><span class="c">理</span></div>
<svg style="position:absolute;left:227.25px;top:172.83px;" width="11.5" height="5.75" viewBox="0 0 11.5 5.75"><path d="M0.7 0.7 L5.75 5.55 L10.8 0.7" fill="none" stroke="#a9b5c3" stroke-width="1.0"/></svg>
<svg style="position:absolute;left:25.3px;top:242.3px;" width="19" height="19" viewBox="0 0 19 19"><g fill="none" stroke="#bfcbd9" stroke-width="1.2"><path d="M3.8 5.8 V0.9 H17.8 V18.1 H3.8 V13.3"/><circle cx="10.6" cy="9.6" r="3.8"/><path d="M1 6.8 H4 M1 9.6 H4 M1 12.4 H4"/></g><circle cx="10.9" cy="9.6" r="1.5" fill="#bfcbd9"/></svg>
<div class="t" style="left:63.8px;top:241.33px;width:186.2px;height:26.14px;line-height:26.14px;font-size:18.67px;color:#bfcbd9;text-align:left;font-weight:400;"><span class="c">办</span><span class="c">公</span><span class="c">管</span><span class="c">理</span></div>
<svg style="position:absolute;left:227.25px;top:247.03px;" width="11.5" height="5.75" viewBox="0 0 11.5 5.75"><path d="M0.7 0.7 L5.75 5.55 L10.8 0.7" fill="none" stroke="#a9b5c3" stroke-width="1.0"/></svg>
<svg style="position:absolute;left:25.3px;top:316.5px;" width="19" height="19" viewBox="0 0 19 19"><g fill="#bfcbd9"><path d="M1 2.2 L10.7 0.2 V18.8 L1 16.9 Z"/><path d="M11.7 2.3 H18.2 V16.8 H11.7 Z"/></g><g stroke="#304156" stroke-width="0.9"><path d="M11.7 4.6 H17 M11.7 6.6 H17 M11.7 8.6 H17 M11.7 10.6 H17 M11.7 12.6 H17 M11.7 14.6 H17"/></g></svg>
<div class="t" style="left:63.8px;top:315.53px;width:186.2px;height:26.14px;line-height:26.14px;font-size:18.67px;color:#bfcbd9;text-align:left;font-weight:400;"><span class="c">料</span><span class="c">品</span><span class="c">档</span><span class="c">案</span></div>
<svg style="position:absolute;left:227.25px;top:321.23px;" width="11.5" height="5.75" viewBox="0 0 11.5 5.75"><path d="M0.7 0.7 L5.75 5.55 L10.8 0.7" fill="none" stroke="#a9b5c3" stroke-width="1.0"/></svg>
<svg style="position:absolute;left:25.3px;top:390.7px;" width="19" height="19" viewBox="0 0 19 19"><rect x="1" y="1.2" width="17.8" height="17.8" rx="2" fill="#bfcbd9"/><path d="M6.6 3.4 H12.6 M9.6 3.4 V15 M6.6 15 H12.6" stroke="#304156" stroke-width="2.2"/></svg>
<div class="t" style="left:63.8px;top:389.73px;width:186.2px;height:26.14px;line-height:26.14px;font-size:18.67px;color:#bfcbd9;text-align:left;font-weight:400;"><span class="c">研</span><span class="c">发</span><span class="c">管</span><span class="c">理</span></div>
<svg style="position:absolute;left:227.25px;top:395.43px;" width="11.5" height="5.75" viewBox="0 0 11.5 5.75"><path d="M0.7 0.7 L5.75 5.55 L10.8 0.7" fill="none" stroke="#a9b5c3" stroke-width="1.0"/></svg>
<svg style="position:absolute;left:25.3px;top:464.9px;" width="19" height="19" viewBox="0 0 19 19"><g fill="#bfcbd9"><path d="M1 1.2 H13 V4.7 H9.5 V15.8 H1 Z"/></g><path d="M2.8 2.3 H10.8" stroke="#304156" stroke-width="1"/><g fill="none" stroke="#bfcbd9" stroke-width="1.3"><path d="M13 4.4 H9.8 V18.2 H18.1 V9.8 L13.9 4.4"/><path d="M13.2 4.6 V9.5 H18"/></g></svg>
<div class="t" style="left:63.8px;top:463.93px;width:186.2px;height:26.14px;line-height:26.14px;font-size:18.67px;color:#bfcbd9;text-align:left;font-weight:400;"><span class="c">销</span><span class="c">售</span><span class="c">管</span><span class="c">理</span></div>
<svg style="position:absolute;left:227.25px;top:469.62px;" width="11.5" height="5.75" viewBox="0 0 11.5 5.75"><path d="M0.7 5.55 L5.75 0.7 L10.8 5.55" fill="none" stroke="#a9b5c3" stroke-width="1.0"/></svg>
<div style="left:0px;top:512.6px;width:266px;height:731.1px;background:#1f2d3d;"></div>
<svg style="position:absolute;left:25.3px;top:535.23px;" width="19" height="19" viewBox="0 0 19 19"><path d="M1 2.5 Q1 1 2.5 1 H11 L15.5 5 V12.5 L10 18 H2.5 Q1 18 1 16.5 Z" fill="#bfcbd9"/><path d="M11 1 V5 H15.5" fill="#1f2d3d"/><path d="M11.3 1 L15.5 4.6 H11.3 Z" fill="#bfcbd9"/><path d="M3.5 8 H11 M3.5 12.5 H9.5" stroke="#1f2d3d" stroke-width="1.8"/><path d="M10.8 18.3 L16.2 13 L18.2 15 L12.8 20 Z" fill="#bfcbd9"/></svg>
<div class="t" style="left:63.8px;top:534.26px;width:186.2px;height:26.14px;line-height:26.14px;font-size:18.67px;color:#bfcbd9;text-align:left;font-weight:400;"><span class="c">客</span><span class="c">户</span><span class="c">档</span><span class="c">案</span></div>
<svg style="position:absolute;left:25.3px;top:601.7px;" width="19" height="19" viewBox="0 0 19 19"><path d="M1 2.5 Q1 1 2.5 1 H11 L15.5 5 V12.5 L10 18 H2.5 Q1 18 1 16.5 Z" fill="#bfcbd9"/><path d="M11 1 V5 H15.5" fill="#1f2d3d"/><path d="M11.3 1 L15.5 4.6 H11.3 Z" fill="#bfcbd9"/><path d="M3.5 8 H11 M3.5 12.5 H9.5" stroke="#1f2d3d" stroke-width="1.8"/><path d="M10.8 18.3 L16.2 13 L18.2 15 L12.8 20 Z" fill="#bfcbd9"/></svg>
<div class="t" style="left:63.8px;top:600.73px;width:186.2px;height:26.14px;line-height:26.14px;font-size:18.67px;color:#bfcbd9;text-align:left;font-weight:400;"><span class="c">销</span><span class="c">售</span><span class="c">合</span><span class="c">同</span></div>
<svg style="position:absolute;left:25.3px;top:668.16px;" width="19" height="19" viewBox="0 0 19 19"><g fill="none" stroke="#bfcbd9" stroke-width="1.3"><rect x="1.8" y="2.3" width="15.6" height="12.4" rx="0.7"/><path d="M1.8 6 H17.4 M1.8 10.2 H17.4 M6.8 6 V14.7 M12 6 V14.7"/></g></svg>
<div class="t" style="left:63.8px;top:667.19px;width:186.2px;height:26.14px;line-height:26.14px;font-size:18.67px;color:#bfcbd9;text-align:left;font-weight:400;"><span class="c">销</span><span class="c">售</span><span class="c">订</span><span class="c">单</span></div>
<svg style="position:absolute;left:25.3px;top:734.62px;" width="19" height="19" viewBox="0 0 19 19"><g fill="#bfcbd9"><rect x="1" y="8.3" width="4.8" height="9.7"/><rect x="7.3" y="1" width="5.2" height="17"/><rect x="13.6" y="4.3" width="4.8" height="13.7"/></g></svg>
<div class="t" style="left:63.8px;top:733.65px;width:186.2px;height:26.14px;line-height:26.14px;font-size:18.67px;color:#bfcbd9;text-align:left;font-weight:400;"><span class="c">订</span><span class="c">单</span><span class="c">进</span><span class="c">度</span><span class="c">图</span></div>
<svg style="position:absolute;left:25.3px;top:801.09px;" width="19" height="19" viewBox="0 0 19 19"><g fill="none" stroke="#bfcbd9" stroke-width="1.3"><rect x="1.8" y="2.3" width="15.6" height="12.4" rx="0.7"/><path d="M1.8 6 H17.4 M1.8 10.2 H17.4 M6.8 6 V14.7 M12 6 V14.7"/></g></svg>
<div class="t" style="left:63.8px;top:800.12px;width:186.2px;height:26.14px;line-height:26.14px;font-size:18.67px;color:#bfcbd9;text-align:left;font-weight:400;"><span class="c">备</span><span class="c">货</span><span class="c">订</span><span class="c">单</span></div>
<svg style="position:absolute;left:25.3px;top:867.55px;" width="19" height="19" viewBox="0 0 19 19"><g fill="none" stroke="#bfcbd9" stroke-width="1.3"><rect x="1.8" y="2.3" width="15.6" height="12.4" rx="0.7"/><path d="M1.8 6 H17.4 M1.8 10.2 H17.4 M6.8 6 V14.7 M12 6 V14.7"/></g></svg>
<div class="t" style="left:63.8px;top:866.58px;width:186.2px;height:26.14px;line-height:26.14px;font-size:18.67px;color:#bfcbd9;text-align:left;font-weight:400;"><span class="c">发</span><span class="c">货</span><span class="c">通</span><span class="c">知</span><span class="c">单</span></div>
<svg style="position:absolute;left:25.3px;top:934.01px;" width="19" height="19" viewBox="0 0 19 19"><g fill="none" stroke="#bfcbd9" stroke-width="1.3"><rect x="1.8" y="2.3" width="15.6" height="12.4" rx="0.7"/><path d="M1.8 6 H17.4 M1.8 10.2 H17.4 M6.8 6 V14.7 M12 6 V14.7"/></g></svg>
<div class="t" style="left:63.8px;top:933.04px;width:186.2px;height:26.14px;line-height:26.14px;font-size:18.67px;color:#bfcbd9;text-align:left;font-weight:400;"><span class="c">开</span><span class="c">票</span><span class="c">结</span><span class="c">算</span><span class="c">单</span></div>
<svg style="position:absolute;left:25.3px;top:1000.48px;" width="19" height="19" viewBox="0 0 19 19"><g fill="none" stroke="#bfcbd9" stroke-width="1.3"><rect x="1.8" y="2.3" width="15.6" height="12.4" rx="0.7"/><path d="M1.8 6 H17.4 M1.8 10.2 H17.4 M6.8 6 V14.7 M12 6 V14.7"/></g></svg>
<div class="t" style="left:63.8px;top:999.51px;width:186.2px;height:26.14px;line-height:26.14px;font-size:18.67px;color:#bfcbd9;text-align:left;font-weight:400;"><span class="c">退</span><span class="c">货</span><span class="c">通</span><span class="c">知</span><span class="c">单</span></div>
<svg style="position:absolute;left:25.3px;top:1066.94px;" width="19" height="19" viewBox="0 0 19 19"><g fill="none" stroke="#bfcbd9" stroke-width="1.3"><path d="M1 1.5 H7 Q9.2 1.5 9.6 3 Q10 1.5 12.2 1.5 H18.2 V16.3 H12.2 Q10.2 16.3 9.6 18 Q9 16.3 7 16.3 H1 Z"/><path d="M9.6 3.2 V17.3" stroke-opacity="0.55"/></g></svg>
<div class="t" style="left:63.8px;top:1065.97px;width:186.2px;height:26.14px;line-height:26.14px;font-size:18.67px;color:#bfcbd9;text-align:left;font-weight:400;"><span class="c">销</span><span class="c">售</span><span class="c">订</span><span class="c">单</span><span class="c">计</span><span class="c">划</span><span class="c">表</span></div>
<svg style="position:absolute;left:25.3px;top:1133.4px;" width="19" height="19" viewBox="0 0 19 19"><g fill="none" stroke="#bfcbd9" stroke-width="1.3"><path d="M1 1.5 H7 Q9.2 1.5 9.6 3 Q10 1.5 12.2 1.5 H18.2 V16.3 H12.2 Q10.2 16.3 9.6 18 Q9 16.3 7 16.3 H1 Z"/><path d="M9.6 3.2 V17.3" stroke-opacity="0.55"/></g></svg>
<div class="t" style="left:63.8px;top:1132.43px;width:186.2px;height:26.14px;line-height:26.14px;font-size:18.67px;color:#bfcbd9;text-align:left;font-weight:400;"><span class="c">销</span><span class="c">售</span><span class="c">订</span><span class="c">单</span><span class="c">明</span><span class="c">细</span><span class="c">表</span></div>
<svg style="position:absolute;left:25.3px;top:1199.87px;" width="19" height="19" viewBox="0 0 19 19"><g fill="none" stroke="#bfcbd9" stroke-width="1.3"><path d="M1 1.5 H7 Q9.2 1.5 9.6 3 Q10 1.5 12.2 1.5 H18.2 V16.3 H12.2 Q10.2 16.3 9.6 18 Q9 16.3 7 16.3 H1 Z"/><path d="M9.6 3.2 V17.3" stroke-opacity="0.55"/></g></svg>
<div class="t" style="left:63.8px;top:1198.9px;width:186.2px;height:26.14px;line-height:26.14px;font-size:18.67px;color:#bfcbd9;text-align:left;font-weight:400;"><span style="letter-spacing:-0.47px">7</span><span class="c">天</span><span class="c">交</span><span class="c">货</span><span class="c">明</span><span class="c">细</span><span class="c">表</span></div>
<svg style="position:absolute;left:25.3px;top:1270.2px;" width="19" height="19" viewBox="0 0 19 19"><g fill="#bfcbd9"><rect x="1" y="8.3" width="4.8" height="9.7"/><rect x="7.3" y="1" width="5.2" height="17"/><rect x="13.6" y="4.3" width="4.8" height="13.7"/></g></svg>
<div class="t" style="left:63.8px;top:1269.23px;width:186.2px;height:26.14px;line-height:26.14px;font-size:18.67px;color:#bfcbd9;text-align:left;font-weight:400;"><span class="c">销</span><span class="c">售</span><span class="c">报</span><span class="c">表</span></div>
<svg style="position:absolute;left:227.25px;top:1274.92px;" width="11.5" height="5.75" viewBox="0 0 11.5 5.75"><path d="M0.7 0.7 L5.75 5.55 L10.8 0.7" fill="none" stroke="#a9b5c3" stroke-width="1.0"/></svg>
<svg style="position:absolute;left:25.3px;top:1344.4px;" width="19" height="19" viewBox="0 0 19 19"><g fill="#bfcbd9"><path d="M1 1.2 H13 V4.7 H9.5 V15.8 H1 Z"/></g><path d="M2.8 2.3 H10.8" stroke="#304156" stroke-width="1"/><g fill="none" stroke="#bfcbd9" stroke-width="1.3"><path d="M13 4.4 H9.8 V18.2 H18.1 V9.8 L13.9 4.4"/><path d="M13.2 4.6 V9.5 H18"/></g></svg>
<div class="t" style="left:63.8px;top:1343.43px;width:186.2px;height:26.14px;line-height:26.14px;font-size:18.67px;color:#bfcbd9;text-align:left;font-weight:400;"><span class="c">生</span><span class="c">产</span><span class="c">计</span><span class="c">划</span></div>
<svg style="position:absolute;left:227.25px;top:1349.12px;" width="11.5" height="5.75" viewBox="0 0 11.5 5.75"><path d="M0.7 0.7 L5.75 5.55 L10.8 0.7" fill="none" stroke="#a9b5c3" stroke-width="1.0"/></svg>
<svg style="position:absolute;left:25.3px;top:1418.6px;" width="19" height="19" viewBox="0 0 19 19"><g fill="#bfcbd9"><path d="M1 1.2 H13 V4.7 H9.5 V15.8 H1 Z"/></g><path d="M2.8 2.3 H10.8" stroke="#304156" stroke-width="1"/><g fill="none" stroke="#bfcbd9" stroke-width="1.3"><path d="M13 4.4 H9.8 V18.2 H18.1 V9.8 L13.9 4.4"/><path d="M13.2 4.6 V9.5 H18"/></g></svg>
<div class="t" style="left:63.8px;top:1417.63px;width:186.2px;height:26.14px;line-height:26.14px;font-size:18.67px;color:#bfcbd9;text-align:left;font-weight:400;"><span class="c">采</span><span class="c">购</span><span class="c">管</span><span class="c">理</span></div>
<svg style="position:absolute;left:227.25px;top:1423.33px;" width="11.5" height="5.75" viewBox="0 0 11.5 5.75"><path d="M0.7 0.7 L5.75 5.55 L10.8 0.7" fill="none" stroke="#a9b5c3" stroke-width="1.0"/></svg>
<svg style="position:absolute;left:25.3px;top:1492.8px;" width="19" height="19" viewBox="0 0 19 19"><path fill="#c8c8c8" fill-rule="evenodd" d="M6.2 1.2 L9.6 2.2 L13 1.2 L14.8 4.2 L18.2 6.5 L17.4 9.6 L18.2 12.7 L14.8 15 L13 18 L9.6 17 L6.2 18 L4.4 15 L1 12.7 L1.8 9.6 L1 6.5 L4.4 4.2 Z M9.6 6 A3.3 3.6 0 1 0 9.61 6 Z"/></svg>
<div class="t" style="left:63.8px;top:1491.83px;width:186.2px;height:26.14px;line-height:26.14px;font-size:18.67px;color:#bfcbd9;text-align:left;font-weight:400;"><span class="c">车</span><span class="c">间</span><span class="c">设</span><span class="c">置</span></div>
<svg style="position:absolute;left:227.25px;top:1497.53px;" width="11.5" height="5.75" viewBox="0 0 11.5 5.75"><path d="M0.7 0.7 L5.75 5.55 L10.8 0.7" fill="none" stroke="#a9b5c3" stroke-width="1.0"/></svg>
<svg style="position:absolute;left:25.3px;top:1567px;" width="19" height="19" viewBox="0 0 19 19"><g fill="#bfcbd9"><path d="M1 1.2 H13 V4.7 H9.5 V15.8 H1 Z"/></g><path d="M2.8 2.3 H10.8" stroke="#304156" stroke-width="1"/><g fill="none" stroke="#bfcbd9" stroke-width="1.3"><path d="M13 4.4 H9.8 V18.2 H18.1 V9.8 L13.9 4.4"/><path d="M13.2 4.6 V9.5 H18"/></g></svg>
<div class="t" style="left:63.8px;top:1566.03px;width:186.2px;height:26.14px;line-height:26.14px;font-size:18.67px;color:#bfcbd9;text-align:left;font-weight:400;"><span class="c">生</span><span class="c">产</span><span class="c">管</span><span class="c">理</span></div>
<svg style="position:absolute;left:227.25px;top:1571.73px;" width="11.5" height="5.75" viewBox="0 0 11.5 5.75"><path d="M0.7 0.7 L5.75 5.55 L10.8 0.7" fill="none" stroke="#a9b5c3" stroke-width="1.0"/></svg>
<svg style="position:absolute;left:25.3px;top:1641.2px;" width="19" height="19" viewBox="0 0 19 19"><g fill="#bfcbd9"><path d="M1 1.2 H13 V4.7 H9.5 V15.8 H1 Z"/></g><path d="M2.8 2.3 H10.8" stroke="#304156" stroke-width="1"/><g fill="none" stroke="#bfcbd9" stroke-width="1.3"><path d="M13 4.4 H9.8 V18.2 H18.1 V9.8 L13.9 4.4"/><path d="M13.2 4.6 V9.5 H18"/></g></svg>
<div class="t" style="left:63.8px;top:1640.23px;width:186.2px;height:26.14px;line-height:26.14px;font-size:18.67px;color:#bfcbd9;text-align:left;font-weight:400;"><span class="c">加</span><span class="c">工</span><span class="c">车</span><span class="c">间</span></div>
<svg style="position:absolute;left:227.25px;top:1645.93px;" width="11.5" height="5.75" viewBox="0 0 11.5 5.75"><path d="M0.7 0.7 L5.75 5.55 L10.8 0.7" fill="none" stroke="#a9b5c3" stroke-width="1.0"/></svg>
</div>
</body></html>
